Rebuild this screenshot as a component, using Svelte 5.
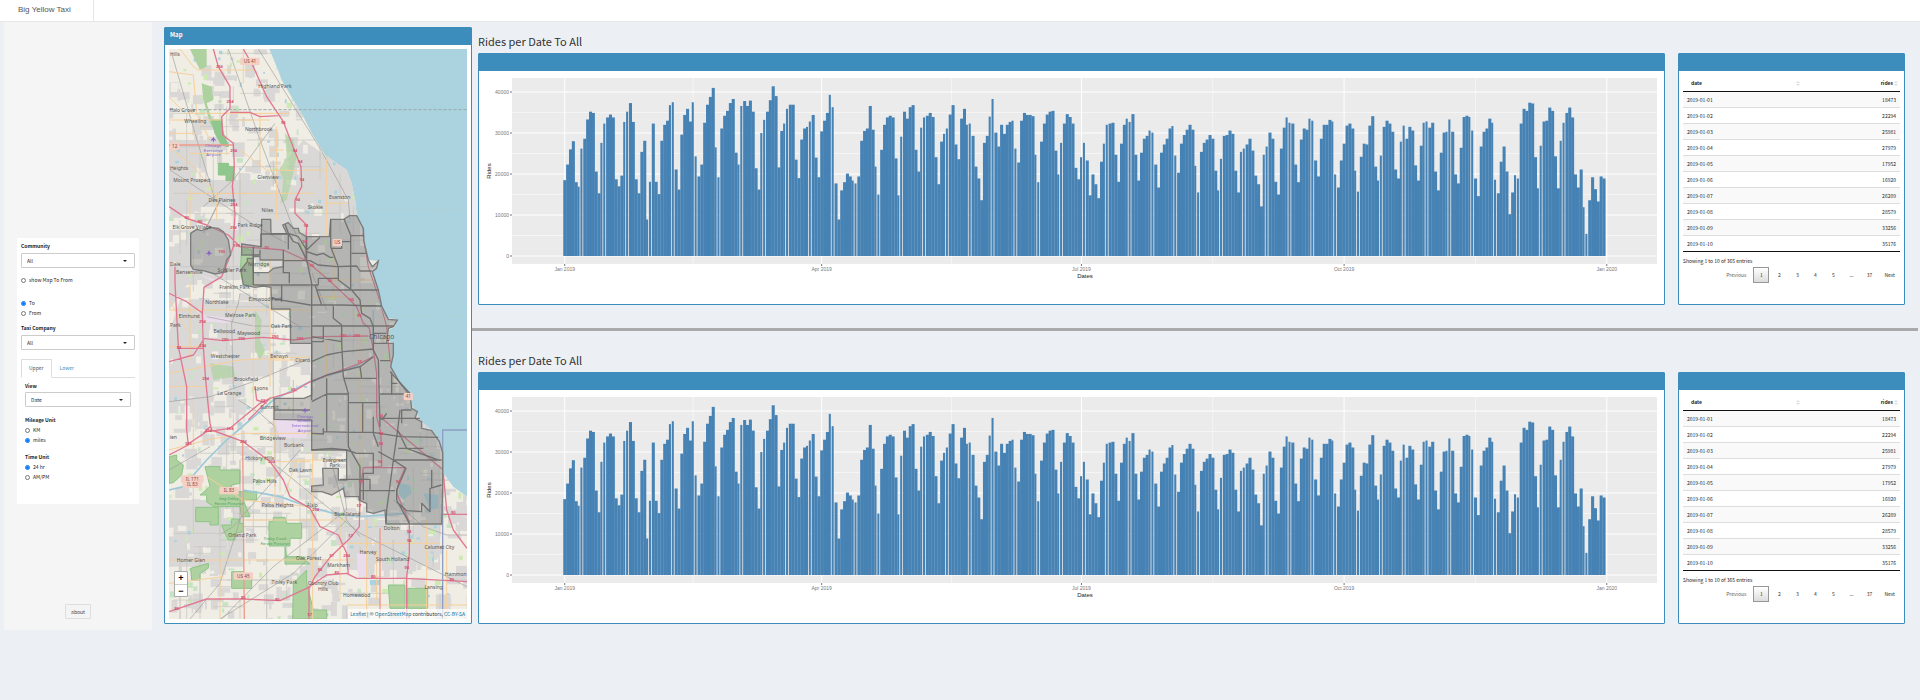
<script>
  const rides = [
    185, 223, 260, 280, 180, 169, 262, 286, 333, 352, 349, 206, 153, 276, 323, 338, 345, 338, 187, 170,
    196, 327, 352, 373, 327, 187, 153, 254, 281, 89, 181, 323, 181, 151, 281, 320, 330, 368, 375, 211,
    162, 296, 344, 359, 328, 375, 243, 194, 223, 325, 369, 388, 410, 265, 192, 311, 342, 354, 373, 383,
    252, 223, 366, 378, 366, 379, 352, 214, 162, 300, 332, 352, 380, 414, 390, 216, 305, 323, 359, 369,
    369, 235, 190, 284, 311, 315, 328, 344, 240, 192, 304, 330, 349, 393, 363, 177, 89, 160, 180, 201,
    194, 184, 177, 194, 281, 305, 311, 366, 308, 218, 150, 259, 320, 338, 342, 338, 238, 148, 291, 352,
    335, 363, 368, 259, 206, 313, 338, 342, 349, 339, 241, 175, 279, 298, 311, 345, 368, 272, 236, 335,
    359, 320, 323, 293, 218, 189, 136, 276, 293, 340, 383, 301, 267, 320, 298, 320, 327, 330, 262, 228,
    330, 349, 344, 344, 341, 247, 180, 279, 323, 345, 352, 354, 257, 199, 276, 323, 346, 339, 323, 215,
    187, 241, 276, 233, 148, 199, 175, 141, 230, 274, 320, 323, 325, 247, 181, 274, 320, 335, 327, 346,
    247, 184, 252, 286, 293, 306, 301, 223, 167, 252, 272, 286, 311, 317, 245, 203, 274, 295, 308, 320,
    308, 220, 155, 254, 276, 284, 295, 286, 208, 160, 237, 293, 295, 306, 298, 208, 155, 254, 262, 272,
    286, 257, 196, 175, 121, 247, 267, 301, 286, 181, 150, 262, 313, 338, 325, 323, 223, 180, 284, 311,
    308, 335, 330, 233, 194, 286, 320, 320, 332, 328, 199, 167, 233, 274, 318, 323, 311, 208, 157, 242,
    274, 272, 318, 341, 218, 184, 245, 315, 330, 323, 303, 211, 189, 279, 318, 286, 315, 306, 221, 184,
    269, 325, 328, 313, 325, 206, 160, 252, 301, 303, 333, 303, 199, 177, 264, 339, 342, 339, 306, 189,
    146, 267, 303, 311, 335, 325, 186, 153, 230, 267, 206, 102, 155, 197, 189, 323, 359, 354, 374, 372,
    241, 165, 269, 328, 330, 362, 354, 243, 165, 281, 325, 349, 362, 338, 199, 167, 211, 119, 54, 136,
    192, 163, 133, 194, 189
  ];

  const rows = [
    ['2019-01-01', 18473], ['2019-01-02', 22294], ['2019-01-03', 25981], ['2019-01-04', 27979],
    ['2019-01-05', 17952], ['2019-01-06', 16920], ['2019-01-07', 26209], ['2019-01-08', 28579],
    ['2019-01-09', 33256], ['2019-01-10', 35176]
  ];

  const pages = ['Previous', '1', '2', '3', '4', '5', '…', '37', 'Next'];

  // chart scales
  const step = 2.855;
  const dayX = (i) => 85.7 + i * step;
  const rideY = (v) => 185 - v * 0.41;
  const isGap = (i) => i % 8 === 5 || i % 8 === 6;
  const months = [
    { day: 0, label: 'Jan 2019' },
    { day: 90, label: 'Apr 2019' },
    { day: 181, label: 'Jul 2019' },
    { day: 273, label: 'Oct 2019' },
    { day: 365, label: 'Jan 2020' }
  ];

  let community = 'All';
  let company = 'All';
  let view = 'Date';
  let showMap = false;
  let direction = 'to';
  let mileage = 'miles';
  let time = '24';

  // small blocks of houses, parks and ponds under the roads
  let seed = 7;
  const rnd = () => (seed = (seed * 16807) % 2147483647) / 2147483647;
  const blocks = [];
  for (let i = 0; i < 1700; i++) {
    const k = rnd();
    const kind = k < 0.5 ? 'houses' : k < 0.6 ? 'park' : k < 0.68 ? 'golf' : k < 0.92 ? 'field' : 'pond';
    const s = kind === 'houses' ? 42 : kind === 'pond' ? 8 : kind === 'field' ? 24 : 14;
    blocks.push({ kind, x: 20 + rnd() * 900, y: -460 + rnd() * 1720, w: 5 + rnd() * s, h: 5 + rnd() * s });
  }
  const streets = [];
  for (let i = 0; i < 190; i++) {
    const x = 20 + Math.round(rnd() * 44) * 20;
    const y = -460 + Math.round(rnd() * 84) * 20;
    const len = 40 + rnd() * 190;
    streets.push(i % 2 ? `M${x} ${y}h${len}` : `M${x} ${y}v${len}`);
  }

  const land = 'M20 -460H325L350 -400 365 -360 400 -300 425 -260 455 -200 495 -135 560 -90 575 -50 585 0 590 40 605 80 612 120 625 180 655 183 650 205 635 215 655 270 660 318 680 355 710 358 705 380 685 390 690 425 700 430 700 465 692 500 715 540 740 580 750 605 770 640 785 665 820 695 835 720 845 755 850 820 880 860 925 892V1265H20Z';

  const towns = [
    ['Hills', 45, -433], ['Highland Park', 345, -337], ['ffalo Grove', 67, -263], ['Wheeling', 106, -232],
    ['Northbrook', 296, -207], ['Heights', 57, -90], ['Mount Prospect', 96, -54], ['Glenview', 324, -62],
    ['Des Plaines', 186, 7], ['Evanston', 539, -2], ['Skokie', 466, 27], ['Niles', 322, 37],
    ['Elk Grove Village', 96, 87], ['Park Ridge', 270, 80], ['Norridge', 296, 198], ['Bensenville', 88, 221],
    ['Schiller Park', 216, 216], ['Franklin Park', 224, 266], ['Northlake', 171, 311], ['Elmwood Park', 316, 303],
    ['Elmhurst', 88, 354], ['Melrose Park', 241, 351], ['Oak Park', 364, 383], ['Bellwood', 193, 398],
    ['Maywood', 266, 404], ['Westchester', 196, 473], ['Berwyn', 357, 474], ['Cicero', 428, 487],
    ['Brookfield', 258, 542], ['Lyons', 303, 570], ['La Grange', 208, 585], ['Summit', 328, 627],
    ['Bridgeview', 338, 719], ['Burbank', 402, 740], ['Hickory Hills', 299, 780], ['Evergreen', 524, 785],
    ['Park', 524, 802], ['Oak Lawn', 421, 816], ['Palos Hills', 314, 850], ['Palos Heights', 353, 920],
    ['Alsip', 457, 920], ['Blue Island', 562, 947], ['Dolton', 695, 990], ['Orland Park', 247, 1011],
    ['Oak Forest', 446, 1079], ['Harvey', 624, 1061], ['Calumet City', 838, 1046], ['South Holland', 698, 1083],
    ['Markham', 536, 1101], ['Homer Glen', 93, 1086], ['Hammon', 887, 1127], ['Tinley Park', 373, 1151],
    ['Country Club', 490, 1155], ['Hills', 489, 1173], ['Lansing', 821, 1168], ['Homewood', 590, 1190],
    ['Park', 46, 380], ['Dale', 46, 198], ['ien', 40, 718]
  ];

  const badges = [
    ['US 41', 270, -416], ['12', 44, -162], ['US', 532, 128], ['41', 745, 590],
    ['IL 171', 97, 837], ['IL 83', 97, 853], ['IL 83', 207, 872], ['US 45', 250, 1128]
  ];

  const shields = [
    ['294', 178, -395], ['294', 210, -290], ['294', 221, -145], ['294', 222, 18], ['294', 220, 88],
    ['94', 370, -229], ['94', 405, -143], ['94', 421, -112], ['94', 426, -58], ['94', 413, 3],
    ['90', 80, 58], ['90', 120, 70], ['190', 185, 158], ['190', 230, 142], ['90', 320, 147], ['94', 438, 80],
    ['94', 434, 130], ['90', 455, 200], ['90', 510, 245], ['90', 575, 302], ['90', 598, 350], ['290', 195, 423],
    ['290', 245, 419], ['290', 345, 415], ['290', 420, 420], ['290', 550, 410], ['290', 590, 410],
    ['294', 127, 370], ['294', 128, 440], ['88', 57, 448], ['294', 137, 540], ['55', 400, 574],
    ['55', 310, 606], ['294', 145, 695], ['294', 210, 690], ['294', 250, 728], ['94', 662, 650],
    ['94', 664, 705], ['94', 662, 735], ['94', 660, 790], ['57', 603, 848], ['57', 597, 920], ['94', 715, 850],
    ['294', 335, 790], ['294', 467, 932], ['57', 572, 1010], ['57', 515, 1072], ['294', 560, 1072],
    ['80', 480, 1112], ['80', 530, 1122], ['80', 640, 1133], ['94', 747, 1000], ['94', 748, 1025],
    ['94', 740, 1108], ['80', 250, 1198], ['80', 352, 1202], ['80', 50, 1230], ['57', 449, 1248],
    ['90', 880, 943], ['80', 875, 1143], ['55', 600, 490], ['355', 85, 735]
  ];
</script>

<header class="navbar">
  <a class="brand" href="#home">Big Yellow Taxi</a>
</header>

<div class="page">
  <aside class="sidebar">
    <form class="well">
      <label class="title" for="community">Community</label>
      <div class="picker">
        <select id="community" bind:value={community}><option>All</option></select>
      </div>

      <label class="choice show-map"><input type="checkbox" bind:checked={showMap} />show Map To From</label>

      <label class="choice"><input type="radio" bind:group={direction} value="to" />To</label>
      <label class="choice"><input type="radio" bind:group={direction} value="from" />From</label>

      <label class="title company" for="company">Taxi Company</label>
      <div class="picker">
        <select id="company" bind:value={company}><option>All</option></select>
      </div>

      <nav class="tabs">
        <a class="active" href="#upper">Upper</a>
        <a href="#lower">Lower</a>
      </nav>

      <div class="tab-content">
        <label class="title" for="view">View</label>
        <div class="picker">
          <select id="view" bind:value={view}><option>Date</option></select>
        </div>
        <fieldset>
          <legend class="title">Mileage Unit</legend>
          <label class="choice"><input type="radio" bind:group={mileage} value="km" />KM</label>
          <label class="choice"><input type="radio" bind:group={mileage} value="miles" />miles</label>
        </fieldset>
        <fieldset>
          <legend class="title">Time Unit</legend>
          <label class="choice"><input type="radio" bind:group={time} value="24" />24 hr</label>
          <label class="choice"><input type="radio" bind:group={time} value="12" />AM/PM</label>
        </fieldset>
      </div>
    </form>
    <button class="about">about</button>
  </aside>

  <section class="box map-box">
    <h3 class="box-header">Map</h3>
    <div class="map">
      <svg class="tiles" viewBox="27 -453 894 1710" preserveAspectRatio="xMidYMid slice">
        <defs>
          <clipPath id="land"><path d={land} /></clipPath>
        </defs>
        <rect x="20" y="-460" width="910" height="1730" fill="#aad3df" />
        <path d={land} fill="#f0ede5" />
        <g clip-path="url(#land)">
          <path fill="#d9d8d6" d="M27 -180H140V-60H330L430 -180 560 -90 600 100V330H330V200H240V20H27ZM27 90H240V240H90L27 330ZM60 300H330V530H160V640H27V400ZM390 250H700V610H840V950H690L590 900 560 750H450V500H390ZM27 900H250V1100H27ZM340 640H560V760H340ZM560 960H840V1110H560ZM430 -20H600V130H430Z" />
          {#each blocks as b}
            <rect class={b.kind} x={b.x} y={b.y} width={b.w} height={b.h} />
          {/each}
          <path d={streets.join('')} fill="none" stroke="#c6c4c0" stroke-width="2" />

          <!-- forest preserves -->
          <g fill="#aed1a0" stroke="#8cc487" stroke-width="3">
            <path d="M90 -453H140V-400L120 -390 105 -420ZM125 -350L155 -340 160 -300 140 -290 150 -260 170 -200 150 -230 130 -300Z" stroke="none" />
            <path fill="#8fc78e" d="M155 -240H185L190 -200 205 -160 185 -165 165 -200ZM175 -110H205L207 -100H222V-58H198V-75H175Z" />
            <path d="M375 -200L400 -180 410 -130 395 -60 380 0 362 10 370 -60 358 -90 380 -130Z" stroke="none" opacity=".7" />
            <path d="M245 140L275 150 280 255 250 255 242 200Z" />
            <path d="M285 330L305 360 300 420 315 450 300 480 285 450ZM150 490L220 500 225 530 160 540Z" stroke="none" opacity=".7" />
            <path d="M27 770L50 765V780L70 795 65 825 40 848 27 850ZM135 800H180V810H240V850L215 855 210 875H290V900H250L270 950 245 950 240 920H160L140 905V885H120L150 860ZM107 922H175V975H150V965H107ZM185 975H215V957H240V970H250V995L225 1000V1020H205L195 1000ZM327 965H340V952H375L380 970H425V1015H390V1038H327ZM375 1040L380 1070H425L450 1092H375ZM92 1105L145 1090V1105L120 1120V1140H95ZM215 1115H250V1125H275V1165H215ZM400 1150L440 1110V1150L445 1170 460 1230H500V1257H398ZM685 1155H735V1225H690ZM743 1165H803V1225H743Z" />
          </g>

          <!-- industry, airports and water -->
          <path fill="#eadcec" d="M340 655H440V715H360ZM120 225L200 250 150 240ZM130 345L210 355 210 370 140 365ZM590 1060H620V1130H595Z" />
          <path fill="#aad3df" d="M720 850L750 855 755 880 730 900 715 880ZM790 880L835 885V925L810 930ZM630 1140H660V1155H630Z" />
          <path fill="none" stroke="#9cc9d9" stroke-width="5" d="M27 870L70 860 140 780 200 720 270 660 340 600 440 550 600 495M250 870L360 890 430 915 520 940 600 950 740 940M640 330L640 440" />

          <path class="rail" d="M35 -440L105 -200 165 0 180 0 135 90M205 -453L300 -180 390 60 440 180 500 330M295 -453L480 -155 565 0 570 60M30 -90L290 80 380 130M345 -230L220 -60 130 20M27 605L150 590 280 545 450 475M165 225L240 270 420 380M140 350L280 378 450 380M560 960L400 1120 180 1257M340 790L600 1000 921 1160M235 600L300 640 345 680V860M240 280L235 310 215 370 220 560M185 1257L340 1100 560 930 555 880M700 900L790 980 860 1005H921M27 810L150 740M510 770L560 960 600 1010M185 1000L220 980 420 750M130 100L180 0M240 780L240 960 180 1150 90 1257" />

          <path class="minor" d="M60 -453L100 -400 115 -390H280M27 -385L100 -375 110 -260 150 -180M27 -310L75 -260H390M27 -240H190M230 -240H330M27 -160L100 -100 160 -30M90 -140H210M27 -200H110M250 -453V-350M300 -260V-100M330 -150L370 -150M90 -20H460M90 -30V90M240 -150L320 -90 420 -88M350 -220V60M430 -90H500M500 -130V110M500 10H560M27 330H455M90 250V480M27 440H130M280 240V640M330 165V560M27 520L240 480 450 470M455 110V320M330 480H450M27 750L140 720 250 700 480 700M345 600V900M375 880L410 780H560M350 785H450M140 830L250 900 450 920M27 1080H580M250 960H560M458 750V1257M540 960V1200M180 1080V1257M27 1150L190 1130M620 960V1257M560 1030H840M650 1050V1200M560 1215H921M800 960V1257M860 1050V1257M600 640V950M520 240H650M525 120V300M455 290H560M500 420V640M600 400V700M27 300L80 390M100 600V750M27 560H140M350 180H450M170 -20V60" />

          <path class="trunk" d="M27 -165H220M248 725L253 1257M660 985V1257" />
          <path class="motorway" d="M160 -453L175 -400 210 -340V-275L185 -250 188 -195 220 -170 223 -100 217 -40 225 40 220 140 205 180 185 230 132 262 127 340 130 440 137 540 150 670 155 690 250 725 330 785 370 840 390 890 450 925 480 980 535 1005 560 1060 565 1125M250 -453L280 -400 320 -310 370 -235 405 -145 423 -100 425 -40 405 0V40L440 75 435 180 500 235 560 290 590 320 610 370 628 385 640 450 650 520V650L663 700 665 800M210 -263H270L300 -250 355 -253M27 20L80 55 140 75 205 105 240 140 310 145 370 150 435 180M128 415L190 422 310 412 400 420 480 410 625 408M27 280L80 305 128 340M45 200V250L55 440 80 560V690L85 735 27 765M27 485L100 465 130 420M80 735L140 695 210 685 300 610 330 595 400 575 450 545 600 490 640 470M55 445H130M150 680L130 700M610 803H735L715 850 710 880 748 965V1060L740 1130V1257M665 800L610 803 600 870 598 980 570 1015 510 1072 465 1130 447 1165V1257M27 1235L140 1197H250L360 1202 440 1165 500 1125 560 1120 590 1135 740 1135 921 1145M850 820L860 930 880 990 921 1045M845 943H921M285 560L290 600 320 610M660 650L850 810M265 660L330 595" />
          <path class="shore" d="M608 100L625 200 655 290 680 380 690 480 750 600" />
        </g>

        <path fill="none" stroke="#9da9ad" stroke-width="3" stroke-dasharray="10 5" d="M100 -271H921" />
        <path fill="none" stroke="#8f9fc4" stroke-width="4" d="M921 690H848V1257" />
        <path fill="none" stroke="#b9cfc8" stroke-width="1" d="M500 -453V-120M820 -453V640M420 -297H921M585 28H921M655 350H921" />

        <!-- community areas -->
        <path class="area" d="M92 100L110 88 125 92 150 82 175 85 190 95 205 120 212 165 200 180 195 200 200 215 165 222 130 212 100 208 92 195Z" />
        <path class="area" fill-rule="evenodd" d="M245 132L303 140 305 58H332L333 102 380 100 368 75 385 68 400 85 415 85 418 98 440 110H508L512 58H552L568 47H590L610 85 612 125 625 180 637 200 655 183 650 205 637 215 655 270 665 318 685 358 712 360 700 380 685 385 680 430H700V465L692 500 720 550 750 585 755 625 772 635 765 655 785 665 785 685 815 692 838 725 848 757V855L845 972H678L675 930 640 940 620 935V910L597 900V890H555L550 865 515 885 485 875H455V858L490 855 488 805H535V840H560L560 750H455V660L342 658V595H432L455 585V430H392L390 327H335L333 262 310 258 285 262 250 255 242 210 262 185V175H280V165H245ZM280 170H300V180H370V200L340 205 325 218 280 218Z" />
        <path class="border" d="M280 140V255M303 140L303 102H385V148M280 165H300V150M370 150V218H388V250M280 255H475M365 255V305M335 295L450 315H540L665 318M440 110V180M370 182H450L475 195 530 200 590 198 600 213H635M375 72L385 100 400 125 415 130 440 180 455 250V600M385 100L415 110 440 150 480 112M512 58V140L535 200V240L575 270 600 300 605 340 630 355 640 380V450L655 480 660 680M552 57L572 105V270M572 107H612M575 160H620M515 145H545V125H572M440 155L470 165 490 160 510 172H520M475 235H535M475 235V255M470 270H655M465 255L485 315M520 318V355L545 375V425L550 530 565 580V740L600 800V900M455 378H700M490 378V425M455 410L545 425M455 425H490M640 400H680M640 430H680M455 485L500 465 550 455 640 447M455 545L500 525 600 500 640 470M600 500L605 535M550 535H650M500 535V697M455 605L500 582H565M565 608H655M608 608V697M660 482H690M695 515V585M660 582H740M690 515L750 580M695 550H712M342 630H450M455 700L490 702V685M490 695L570 697H640L720 710 835 712M720 630L713 690 740 745 835 780M713 690L700 780 680 930 678 970M660 655H780M640 650V700L655 740M590 760H640V820H610V900M560 750L590 760M655 755L700 780H845M700 780L738 805 710 870V900L748 970M600 872H705M540 838H630V870M715 745H790M710 905L740 932 785 935V910L810 935V865L845 855M725 670V630H755M815 865V810M455 750L515 745 560 750M680 640L665 660" />

        <g class="towns">
          {#each towns as [name, x, y]}<text {x} {y}>{name}</text>{/each}
        </g>
        <text class="city" x="665" y="416">Chicago</text>
        <g class="airport">
          <path d="M640 0l3 6 5 4v2l-6-2-1 6h-2l-1-6-6 2v-2l5-4z" transform="translate(-480 -190)" />
          <path d="M640 0l3 6 5 4v2l-6-2-1 6h-2l-1-6-6 2v-2l5-4z" transform="translate(-493 151)" />
          <path d="M640 0l3 6 5 4v2l-6-2-1 6h-2l-1-6-6 2v-2l5-4z" transform="translate(-205 623)" />
          <text x="160" y="-160">Chicago</text><text x="160" y="-145">Executive</text><text x="160" y="-131">Airport</text>
          <text x="435" y="653">Chicago</text><text x="435" y="667">Midway</text><text x="435" y="681">International</text><text x="435" y="695">Airport</text>
        </g>
        <g class="forest">
          <text x="207" y="900">Sag Valley</text><text x="207" y="914">Forest Preserve</text>
          <text x="345" y="1020">Tinley Creek</text><text x="345" y="1035">Forest Preserve</text>
        </g>
        {#each badges as [name, x, y]}
          <rect x={x - name.length * 5 - 4} y={y - 11} width={name.length * 10 + 8} height="22" rx="3" fill="#f5cfc3" />
          <text class="badge" {x} y={y + 5}>{name}</text>
        {/each}
        {#each shields as [name, x, y]}<text class="shield" {x} {y}>{name}</text>{/each}
      </svg>
      <div class="zoom">
        <button aria-label="Zoom in">+</button>
        <button aria-label="Zoom out">−</button>
      </div>
      <div class="credits">
        <a href="#leaflet">Leaflet</a> | © <a href="#osm">OpenStreetMap</a> contributors, <a href="#licence">CC-BY-SA</a>
      </div>
    </div>
  </section>

  <main class="content">
    {#each ['upper', 'lower'] as part, n}
      {#if n > 0}<hr />{/if}
      <section class="panel">
        <h4>Rides per Date To All</h4>
        <div class="boxes">
          <div class="box">
            <div class="box-header"></div>
            <svg class="chart" viewBox="0 0 1185 212">
              <rect x="33" y="7" width="1145" height="186" fill="#ebebeb" />
              {#each [50, 150, 250, 350] as v}
                <line class="grid thin" x1="33" x2="1178" y1={rideY(v)} y2={rideY(v)} />
              {/each}
              {#each [45, 135.5, 227, 319] as d}
                <line class="grid thin" x1={dayX(d)} x2={dayX(d)} y1="7" y2="193" />
              {/each}
              {#each [0, 100, 200, 300, 400] as v}
                <line class="grid" x1="33" x2="1178" y1={rideY(v)} y2={rideY(v)} />
                <line class="tick" x1="31" x2="33" y1={rideY(v)} y2={rideY(v)} />
                <text class="axis" x="30" y={rideY(v) + 2} text-anchor="end">{v * 100}</text>
              {/each}
              {#each months as m}
                <line class="grid" x1={dayX(m.day)} x2={dayX(m.day)} y1="7" y2="193" />
                <line class="tick" x1={dayX(m.day)} x2={dayX(m.day)} y1="193" y2="195" />
                <text class="axis" x={dayX(m.day)} y="200" text-anchor="middle">{m.label}</text>
              {/each}
              {#each rides as v, i}
                <rect
                  x={dayX(i) - step / 2}
                  y={rideY(v)}
                  width={isGap(i) ? step - 0.8 : step + 0.2}
                  height={185 - rideY(v)}
                  fill="#4682b4"
                />
              {/each}
              <text class="axis-title" x="606" y="207" text-anchor="middle">Dates</text>
              <text class="axis-title" transform="translate(12 100) rotate(-90)" text-anchor="middle">Rides</text>
            </svg>
          </div>

          <div class="box">
            <div class="box-header"></div>
            <div class="table-body">
              <table>
                <thead>
                  <tr>
                    <th>date<span class="sort"></span></th>
                    <th class="number">rides<span class="sort"></span></th>
                  </tr>
                </thead>
                <tbody>
                  {#each rows as [date, count]}
                    <tr><td>{date}</td><td class="number">{count}</td></tr>
                  {/each}
                </tbody>
              </table>
              <p class="info">Showing 1 to 10 of 365 entries</p>
              <nav class="pages">
                {#each pages as p}
                  {#if p === '…'}
                    <span>…</span>
                  {:else}
                    <a href="#{part}-{p}" class:current={p === '1'} class:off={p === 'Previous'}>{p}</a>
                  {/if}
                {/each}
              </nav>
            </div>
          </div>
        </div>
      </section>
    {/each}
  </main>
</div>

<style>
  :global(body) {
    margin: 0;
    background: #ecf0f5;
    color: #222;
    font-family: 'Noto Sans CJK SC', 'Open Sans', sans-serif;
    font-size: 5px;
    line-height: 8px;
  }

  * {
    box-sizing: border-box;
  }

  a {
    color: #3c8dbc;
    text-decoration: none;
  }

  .navbar {
    display: flex;
    height: 22px;
    background: #fff;
    border-bottom: 1px solid #e7e7e7;
  }

  .brand {
    width: 94px;
    padding-left: 18px;
    border-right: 1px solid #e7e7e7;
    color: #555;
    font-family: 'Liberation Sans', Arial, sans-serif;
    font-size: 8px;
    line-height: 20px;
  }

  .page {
    display: grid;
    grid-template-columns: 148px minmax(0, 320fr) minmax(0, 1446fr);
    padding: 0 2px 0 4px;
  }

  /* sidebar */
  .sidebar {
    display: flex;
    flex-direction: column;
    align-items: center;
    padding: 216px 13px 11px;
    background: #f5f5f5;
  }

  .well {
    display: flex;
    flex-direction: column;
    width: 100%;
    padding: 4px 4px 22px;
    background: #fff;
  }

  .title {
    display: block;
    padding: 0;
    font-weight: bold;
  }

  .picker {
    position: relative;
    margin-top: 3px;
  }

  .picker::after {
    content: '';
    position: absolute;
    top: 7px;
    right: 8px;
    border: 2px solid transparent;
    border-top-color: #222;
    border-bottom: 0;
  }

  select {
    display: block;
    width: 100%;
    height: 15px;
    padding: 0 5px;
    appearance: none;
    background: #fff;
    border: 1px solid #ccc;
    border-radius: 1px;
    color: #222;
    font: inherit;
  }

  .choice {
    display: flex;
    align-items: center;
    gap: 3px;
    height: 10px;
  }

  .choice input {
    width: 5px;
    height: 5px;
    margin: 0;
  }

  .show-map {
    margin: 7px 0 13px;
  }

  .company {
    margin-top: 6px;
  }

  .tabs {
    display: flex;
    margin-top: 9px;
    border-bottom: 1px solid #ddd;
  }

  .tabs a {
    margin-bottom: -1px;
    padding: 4px 7px 5px;
    border: 1px solid transparent;
  }

  .tabs .active {
    background: #fff;
    border-color: #ddd;
    border-bottom-color: #fff;
    border-radius: 1px 1px 0 0;
    color: #555;
  }

  .tab-content {
    padding: 4px 4px 0;
  }

  .tab-content .picker {
    margin-top: 2px;
  }

  fieldset {
    margin: 9px 0 0;
    padding: 0;
    border: 0;
  }

  fieldset + fieldset {
    margin-top: 8px;
  }

  legend {
    margin-bottom: 1px;
  }

  .about {
    margin-top: 100px;
    height: 15px;
    padding: 0 5px;
    background: #f4f4f4;
    border: 1px solid #ddd;
    border-radius: 1px;
    color: #444;
    font: inherit;
  }

  /* boxes */
  .box {
    display: flex;
    flex-direction: column;
    background: #fff;
    border: 1px solid #3c8dbc;
    border-radius: 1px;
  }

  .box-header {
    height: 17px;
    margin: 0;
    padding-left: 5px;
    background: #3c8dbc;
    color: #fff;
    font-size: 6px;
    line-height: 14px;
  }

  .map-box {
    margin: 5px 0 6px 12px;
  }

  /* map */
  .map {
    position: relative;
    flex: 1;
    margin: 4px;
    overflow: hidden;
  }

  .tiles {
    position: absolute;
    width: 100%;
    height: 100%;
  }

  .houses { fill: #d9d8d6; }
  .park { fill: #cdebb0; }
  .golf { fill: #c6e4c3; }
  .field { fill: #f0ede5; }
  .pond { fill: #aad3df; }

  .rail,
  .minor,
  .trunk,
  .motorway,
  .shore,
  .border {
    fill: none;
    stroke-linejoin: round;
  }

  .rail { stroke: #a09e9b; stroke-width: 2; }
  .minor { stroke: #f6cf98; stroke-width: 3; }
  .trunk { stroke: #ee9a8b; stroke-width: 4; }
  .motorway { stroke: #e07891; stroke-width: 4; }
  .shore { stroke: #dc6b80; stroke-width: 3; }
  .area { fill: rgba(120, 120, 120, 0.38); stroke: #7c7c7c; stroke-width: 4; }
  .border { stroke: #6a6a6a; stroke-width: 4; opacity: 0.9; }

  .tiles text {
    font-family: 'Noto Sans', sans-serif;
    font-size: 15px;
    text-anchor: middle;
    fill: #555;
  }

  .tiles .city { font-size: 20px; }
  .tiles .badge { font-size: 14px; fill: #8a4a40; }
  .tiles .shield { font-size: 12px; font-weight: bold; fill: #d4506b; }
  .tiles .airport text,
  .airport path { fill: #8461c4; font-size: 13px; }
  .tiles .forest text { fill: #4f9f58; font-size: 13px; font-style: italic; }

  .zoom {
    position: absolute;
    bottom: 22px;
    left: 5px;
    border: 1px solid #aaa;
    border-radius: 1px;
  }

  .zoom button {
    display: block;
    width: 12px;
    height: 12px;
    padding: 0;
    background: #fff;
    border: 0;
    color: #000;
    font: bold 9px/12px 'Liberation Sans', sans-serif;
  }

  .zoom button + button {
    border-top: 1px solid #ccc;
  }

  .credits {
    position: absolute;
    right: 0;
    bottom: 0;
    padding: 0 2px;
    background: rgba(255, 255, 255, 0.7);
    color: #333;
    line-height: 10px;
    white-space: nowrap;
  }

  .credits a {
    color: #0078a8;
  }

  /* charts and tables */
  .content {
    padding: 11px 0 6px;
  }

  .panel {
    padding: 0 13px 0 6px;
  }

  h4 {
    margin: 0;
    padding-bottom: 4px;
    color: #333;
    font-size: 11px;
    font-weight: normal;
    line-height: 16px;
  }

  hr {
    height: 3px;
    margin: 23px 0 21px;
    background: #aaa;
    border: 0;
  }

  .boxes {
    display: grid;
    grid-template-columns: minmax(0, 1187fr) minmax(0, 227fr);
    gap: 13px;
  }

  .chart {
    display: block;
    width: 100%;
  }

  .grid { stroke: #fff; stroke-width: 1; }
  .grid.thin { opacity: 0.5; }
  .tick { stroke: #777; stroke-width: 1; }

  .chart text {
    font-family: 'Liberation Sans', Arial, sans-serif;
  }

  .axis { font-size: 5px; fill: #777; }
  .axis-title { font-size: 6px; fill: #222; }

  .table-body {
    padding: 4px 4px 21px;
  }

  table {
    width: 100%;
    border-collapse: separate;
    border-spacing: 0;
    border-bottom: 1px solid #111;
  }

  th {
    position: relative;
    height: 17px;
    padding: 0 7px 0 8px;
    border-bottom: 1px solid #111;
    text-align: left;
  }

  th:first-child {
    width: 55%;
  }

  td {
    height: 16px;
    padding: 0 4px;
    border-top: 1px solid #ddd;
  }

  tr:first-child td {
    border-top: 0;
    height: 15px;
  }

  tbody tr:nth-child(odd) {
    background: #f9f9f9;
  }

  th.number,
  .number {
    text-align: right;
  }

  .sort::before,
  .sort::after {
    content: '';
    position: absolute;
    right: 2px;
    border: 2px solid transparent;
  }

  .sort::before {
    bottom: 8px;
    border-bottom-color: #ddd;
    border-top: 0;
  }

  .sort::after {
    top: 9px;
    border-top-color: #ddd;
    border-bottom: 0;
  }

  .info {
    margin: 5px 0 2px;
  }

  .pages {
    display: flex;
    justify-content: flex-end;
    gap: 2px;
  }

  .pages a,
  .pages span {
    min-width: 16px;
    padding: 3px 4px;
    border: 1px solid transparent;
    color: #333;
    text-align: center;
  }

  .pages span {
    font-family: 'Noto Sans', sans-serif;
  }

  .pages .off {
    color: #666;
  }

  .pages .current {
    background: linear-gradient(#fff, #dcdcdc);
    border-color: #979797;
  }
</style>
